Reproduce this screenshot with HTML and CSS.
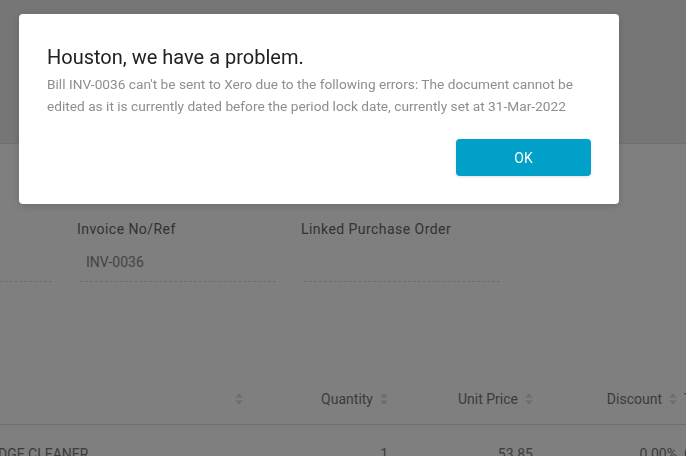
FILE: index.html
```html
<!DOCTYPE html>
<html>
<head>
<meta charset="utf-8">
<link rel="stylesheet" href="styles.css">
</head>
<body>
<div class="page">
  <header class="topbar"></header>

  <section class="fields">
    <div class="field">
      <div class="field-label">Supplier</div>
      <div class="field-input"></div>
    </div>
    <div class="field">
      <div class="field-label">Invoice No/Ref</div>
      <div class="field-input">INV-0036</div>
    </div>
    <div class="field">
      <div class="field-label">Linked Purchase Order</div>
      <div class="field-input"></div>
    </div>
  </section>

  <section class="lines">
    <div class="row head">
      <div class="cell desc"><span class="sort"><svg viewBox="0 0 8 12" width="8" height="12"><path d="M4 0.5L7.5 4.5H0.5Z"/><path d="M4 11.5L7.5 7.5H0.5Z"/></svg></span></div>
      <div class="cell num">Quantity<span class="sort"><svg viewBox="0 0 8 12" width="8" height="12"><path d="M4 0.5L7.5 4.5H0.5Z"/><path d="M4 11.5L7.5 7.5H0.5Z"/></svg></span></div>
      <div class="cell num">Unit Price<span class="sort"><svg viewBox="0 0 8 12" width="8" height="12"><path d="M4 0.5L7.5 4.5H0.5Z"/><path d="M4 11.5L7.5 7.5H0.5Z"/></svg></span></div>
      <div class="cell num">Discount<span class="sort"><svg viewBox="0 0 8 12" width="8" height="12"><path d="M4 0.5L7.5 4.5H0.5Z"/><path d="M4 11.5L7.5 7.5H0.5Z"/></svg></span></div>
      <div class="cell tail">Tax</div>
    </div>
    <div class="row item">
      <div class="cell desc">EDGE CLEANER</div>
      <div class="cell num">1</div>
      <div class="cell num">53.85</div>
      <div class="cell num">0.00%</div>
      <div class="cell tail">GST</div>
    </div>
  </section>
</div>

<div class="overlay">
  <div class="dialog" role="dialog">
    <h2 class="dialog-title">Houston, we have a problem.</h2>
    <p class="dialog-text">Bill INV-0036 can't be sent to Xero due to the following errors: The document cannot be edited as it is currently dated before the period lock date, currently set at 31-Mar-2022</p>
    <div class="dialog-actions">
      <button class="btn-ok">OK</button>
    </div>
  </div>
</div>
</body>
</html>
```

FILE: styles.css
```css
* { box-sizing: border-box; }

html, body {
  margin: 0;
  padding: 0;
  width: 686px;
  height: 456px;
  overflow: hidden;
  background: #ffffff;
  font-family: Roboto, "Liberation Sans", sans-serif;
}

.page {
  width: 686px;
  height: 456px;
  overflow: hidden;
}

.topbar {
  height: 144px;
  background: #ececec;
  border-bottom: 1px solid #e0e0e0;
}

.fields {
  display: flex;
  gap: 25px;
  margin-top: 75px;
  margin-left: -147px;
}

.field {
  width: 199px;
  flex: none;
}

.field-label {
  font-size: 14px;
  line-height: 20px;
  color: #666666;
  letter-spacing: 0.45px;
}

.field-input {
  margin-left: 3px;
  margin-top: 4px;
  height: 39px;
  padding: 10px 0 0 6px;
  font-size: 14px;
  line-height: 18px;
  color: #888888;
  border-bottom: 1px dashed #dcdcdc;
}

.lines {
  margin-top: 92px;
  margin-left: -30px;
}

.row {
  display: grid;
  grid-template-columns: 279px 145px 145px 144px 100px;
  align-items: center;
  font-size: 14px;
  color: #777777;
}

.row.head {
  height: 51px;
  border-bottom: 1px solid #dddddd;
}

.row.item {
  height: 54px;
  padding-top: 3px;
}

.cell {
  white-space: nowrap;
}

.cell.desc {
  padding-left: 20px;
}

.row.head .cell.desc {
  display: flex;
  justify-content: flex-end;
  padding-right: 6px;
}

.cell.num {
  display: flex;
  justify-content: flex-end;
  align-items: center;
  padding-right: 6px;
}

.cell.tail {
  padding-left: 1px;
}

.sort {
  display: inline-flex;
  margin-left: 7px;
}

.sort svg path {
  fill: #d6d6d6;
}

.row.head .cell.desc .sort {
  margin-left: 0;
}

.overlay {
  position: fixed;
  inset: 0;
  background: rgba(0, 0, 0, 0.5);
}

.dialog {
  position: absolute;
  top: 14px;
  left: 19px;
  width: 600px;
  height: 190px;
  background: #ffffff;
  border-radius: 4px;
  padding: 31px 28px 28px 28px;
  box-shadow: 0 2px 8px rgba(0, 0, 0, 0.15);
}

.dialog-title {
  margin: 0 0 4px 0;
  font-size: 20px;
  line-height: 24px;
  font-weight: 400;
  color: #212121;
}

.dialog-text {
  margin: 0;
  font-size: 13.7px;
  line-height: 22px;
  color: #8e8e8e;
}

.dialog-actions {
  display: flex;
  justify-content: flex-end;
  margin-top: 22px;
}

.btn-ok {
  width: 135px;
  height: 37px;
  border: none;
  border-radius: 4px;
  background: #00a0c9;
  color: #ffffff;
  font-family: Roboto, "Liberation Sans", sans-serif;
  font-size: 14px;
  box-shadow: 0 1px 3px rgba(0, 0, 0, 0.12);
  cursor: pointer;
}
```
